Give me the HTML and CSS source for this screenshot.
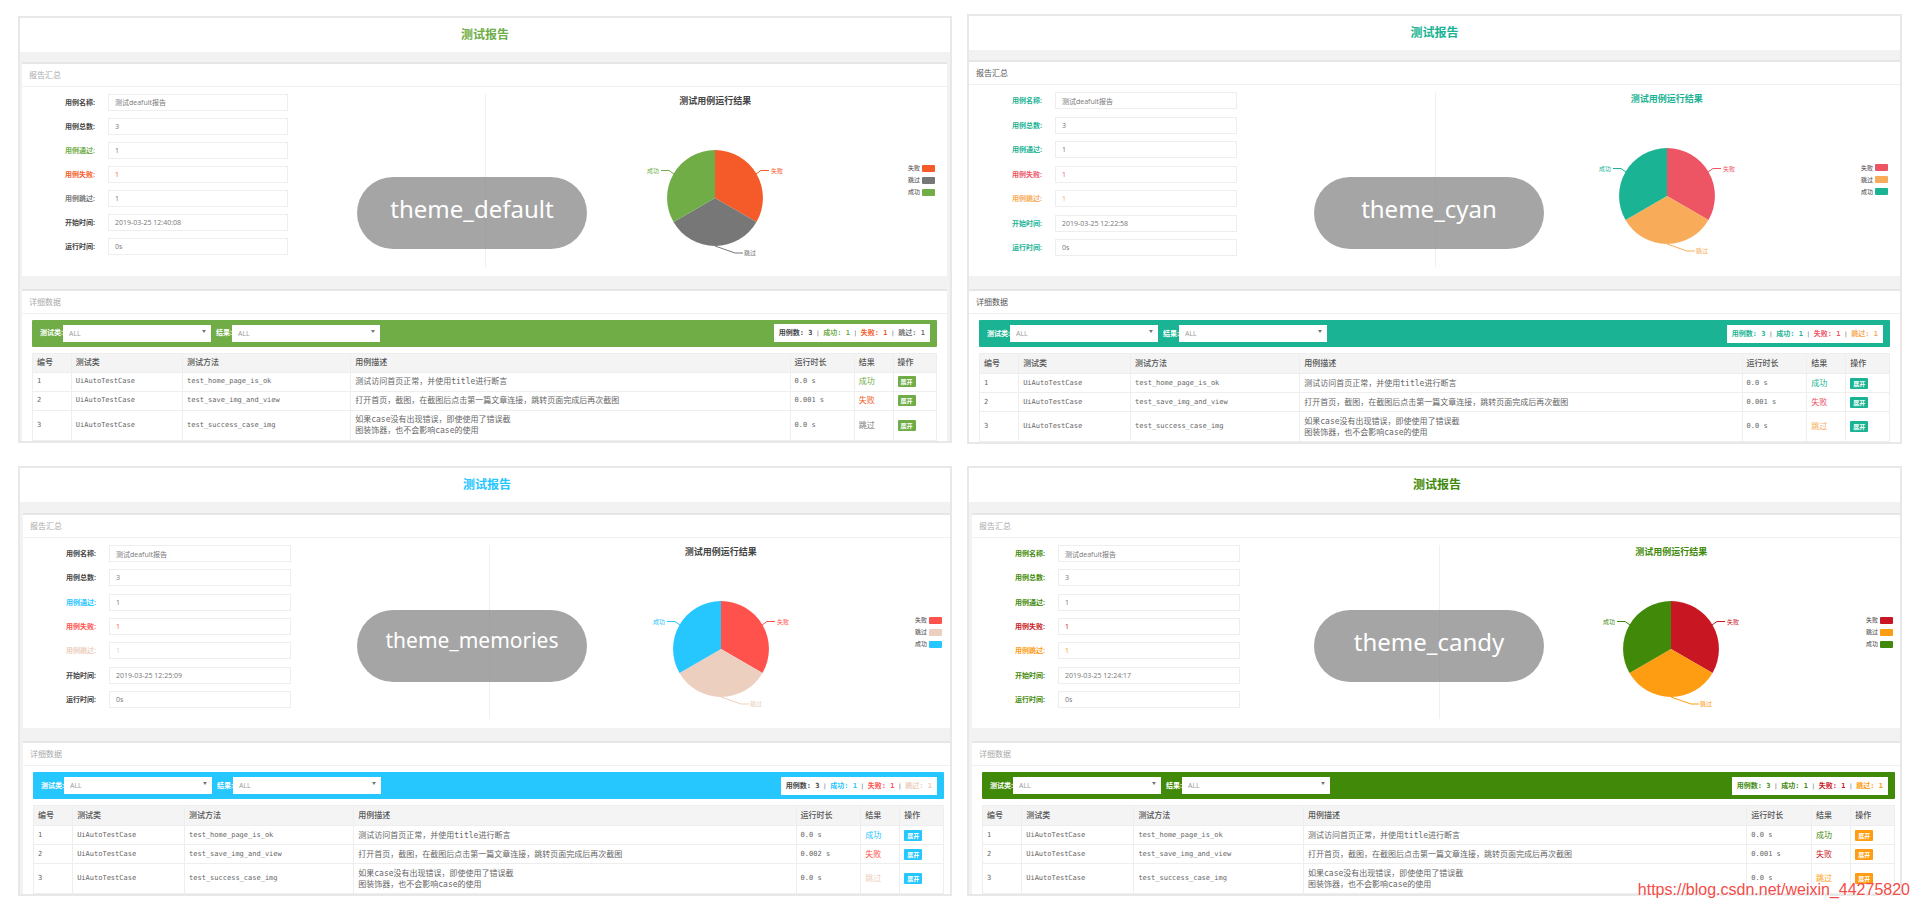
FILE: index.html
```html
<!DOCTYPE html>
<html lang="zh-CN">
<head>
<meta charset="utf-8">
<title>测试报告</title>
<link rel="stylesheet" href="styles.css">
</head>
<body>
<svg class="defs" aria-hidden="true">
  <symbol id="pie" viewBox="-75 -58 150 120">
    <path class="fill-fail" d="M0 0V-48A48 48 0 0 1 41.5 24Z"/>
    <path class="fill-skip" d="M0 0L41.5 24A48 48 0 0 1 -41.5 24Z"/>
    <path class="fill-pass" d="M0 0L-41.5 24A48 48 0 0 1 0 -48Z"/>
    <path class="line-fail" d="M41 -24L46 -27.5H54"/>
    <path class="line-skip" d="M0 48L20 55H28"/>
    <path class="line-pass" d="M-41 -24L-46 -27.5H-54"/>
  </symbol>
</svg>
<main class="gallery">

<article class="report theme-default">
  <div class="page">
    <header class="title"><h1>测试报告</h1></header>
    <section class="card">
      <h2>报告汇总</h2>
      <div class="summary">
        <form class="fields">
          <label for="a1">用例名称:</label><input id="a1" value="测试deafult报告">
          <label for="a2">用例总数:</label><input id="a2" value="3">
          <label for="a3" class="pass">用例通过:</label><input id="a3" value="1">
          <label for="a4" class="fail">用例失败:</label><input id="a4" class="fail" value="1">
          <label for="a5" class="skip">用例跳过:</label><input id="a5" class="skip" value="1">
          <label for="a6">开始时间:</label><input id="a6" value="2019-03-25 12:40:08">
          <label for="a7">运行时间:</label><input id="a7" value="0s">
        </form>
        <div class="chart">
          <h3>测试用例运行结果</h3>
          <svg class="pie" viewBox="-75 -58 150 120"><use href="#pie" x="-75" y="-58" width="150" height="120"/><text class="fill-fail" x="56" y="-25">失败</text><text class="fill-skip" x="29" y="57">跳过</text><text class="fill-pass" x="-56" y="-25" text-anchor="end">成功</text></svg>
          <ul class="legend"><li class="key-fail">失败</li><li class="key-skip">跳过</li><li class="key-pass">成功</li></ul>
        </div>
      </div>
    </section>
    <section class="card">
      <h2>详细数据</h2>
      <div class="details">
        <div class="toolbar">
          <label for="a8">测试类:</label><span class="select"><select id="a8"><option>ALL</option></select></span>
          <label for="a9">结果:</label><span class="select"><select id="a9"><option>ALL</option></select></span>
          <p class="stats"><b>用例数: 3</b><i> | </i><b class="pass">成功: 1</b><i> | </i><b class="fail">失败: 1</b><i> | </i><b class="skip">跳过: 1</b></p>
        </div>
        <table>
          <colgroup><col class="c-no"><col class="c-class"><col class="c-method"><col><col class="c-time"><col class="c-result"><col class="c-action"></colgroup>
          <thead><tr><th>编号</th><th>测试类</th><th>测试方法</th><th>用例描述</th><th>运行时长</th><th>结果</th><th>操作</th></tr></thead>
          <tbody>
            <tr><td>1</td><td>UiAutoTestCase</td><td>test_home_page_is_ok</td><td class="desc">测试访问首页正常，并使用title进行断言</td><td>0.0 s</td><td class="result pass">成功</td><td><button type="button">展开</button></td></tr>
            <tr><td>2</td><td>UiAutoTestCase</td><td>test_save_img_and_view</td><td class="desc">打开首页，截图，在截图后点击第一篇文章连接，跳转页面完成后再次截图</td><td>0.001 s</td><td class="result fail">失败</td><td><button type="button">展开</button></td></tr>
            <tr class="tall"><td>3</td><td>UiAutoTestCase</td><td>test_success_case_img</td><td class="desc">如果case没有出现错误，即使使用了错误截<br>图装饰器，也不会影响case的使用</td><td>0.0 s</td><td class="result skip">跳过</td><td><button type="button">展开</button></td></tr>
          </tbody>
        </table>
      </div>
    </section>
  </div>
  <p class="badge">theme_default</p>
</article>

<article class="report theme-cyan">
  <div class="page">
    <header class="title"><h1>测试报告</h1></header>
    <section class="card">
      <h2>报告汇总</h2>
      <div class="summary">
        <form class="fields">
          <label for="b1">用例名称:</label><input id="b1" value="测试deafult报告">
          <label for="b2">用例总数:</label><input id="b2" value="3">
          <label for="b3" class="pass">用例通过:</label><input id="b3" value="1">
          <label for="b4" class="fail">用例失败:</label><input id="b4" class="fail" value="1">
          <label for="b5" class="skip">用例跳过:</label><input id="b5" class="skip" value="1">
          <label for="b6">开始时间:</label><input id="b6" value="2019-03-25 12:22:58">
          <label for="b7">运行时间:</label><input id="b7" value="0s">
        </form>
        <div class="chart">
          <h3>测试用例运行结果</h3>
          <svg class="pie" viewBox="-75 -58 150 120"><use href="#pie" x="-75" y="-58" width="150" height="120"/><text class="fill-fail" x="56" y="-25">失败</text><text class="fill-skip" x="29" y="57">跳过</text><text class="fill-pass" x="-56" y="-25" text-anchor="end">成功</text></svg>
          <ul class="legend"><li class="key-fail">失败</li><li class="key-skip">跳过</li><li class="key-pass">成功</li></ul>
        </div>
      </div>
    </section>
    <section class="card">
      <h2>详细数据</h2>
      <div class="details">
        <div class="toolbar">
          <label for="b8">测试类:</label><span class="select"><select id="b8"><option>ALL</option></select></span>
          <label for="b9">结果:</label><span class="select"><select id="b9"><option>ALL</option></select></span>
          <p class="stats"><b>用例数: 3</b><i> | </i><b class="pass">成功: 1</b><i> | </i><b class="fail">失败: 1</b><i> | </i><b class="skip">跳过: 1</b></p>
        </div>
        <table>
          <colgroup><col class="c-no"><col class="c-class"><col class="c-method"><col><col class="c-time"><col class="c-result"><col class="c-action"></colgroup>
          <thead><tr><th>编号</th><th>测试类</th><th>测试方法</th><th>用例描述</th><th>运行时长</th><th>结果</th><th>操作</th></tr></thead>
          <tbody>
            <tr><td>1</td><td>UiAutoTestCase</td><td>test_home_page_is_ok</td><td class="desc">测试访问首页正常，并使用title进行断言</td><td>0.0 s</td><td class="result pass">成功</td><td><button type="button">展开</button></td></tr>
            <tr><td>2</td><td>UiAutoTestCase</td><td>test_save_img_and_view</td><td class="desc">打开首页，截图，在截图后点击第一篇文章连接，跳转页面完成后再次截图</td><td>0.001 s</td><td class="result fail">失败</td><td><button type="button">展开</button></td></tr>
            <tr class="tall"><td>3</td><td>UiAutoTestCase</td><td>test_success_case_img</td><td class="desc">如果case没有出现错误，即使使用了错误截<br>图装饰器，也不会影响case的使用</td><td>0.0 s</td><td class="result skip">跳过</td><td><button type="button">展开</button></td></tr>
          </tbody>
        </table>
      </div>
    </section>
  </div>
  <p class="badge">theme_cyan</p>
</article>

<article class="report theme-memories">
  <div class="page">
    <header class="title"><h1>测试报告</h1></header>
    <section class="card">
      <h2>报告汇总</h2>
      <div class="summary">
        <form class="fields">
          <label for="c1">用例名称:</label><input id="c1" value="测试deafult报告">
          <label for="c2">用例总数:</label><input id="c2" value="3">
          <label for="c3" class="pass">用例通过:</label><input id="c3" value="1">
          <label for="c4" class="fail">用例失败:</label><input id="c4" class="fail" value="1">
          <label for="c5" class="skip">用例跳过:</label><input id="c5" class="skip" value="1">
          <label for="c6">开始时间:</label><input id="c6" value="2019-03-25 12:25:09">
          <label for="c7">运行时间:</label><input id="c7" value="0s">
        </form>
        <div class="chart">
          <h3>测试用例运行结果</h3>
          <svg class="pie" viewBox="-75 -58 150 120"><use href="#pie" x="-75" y="-58" width="150" height="120"/><text class="fill-fail" x="56" y="-25">失败</text><text class="fill-skip" x="29" y="57">跳过</text><text class="fill-pass" x="-56" y="-25" text-anchor="end">成功</text></svg>
          <ul class="legend"><li class="key-fail">失败</li><li class="key-skip">跳过</li><li class="key-pass">成功</li></ul>
        </div>
      </div>
    </section>
    <section class="card">
      <h2>详细数据</h2>
      <div class="details">
        <div class="toolbar">
          <label for="c8">测试类:</label><span class="select"><select id="c8"><option>ALL</option></select></span>
          <label for="c9">结果:</label><span class="select"><select id="c9"><option>ALL</option></select></span>
          <p class="stats"><b>用例数: 3</b><i> | </i><b class="pass">成功: 1</b><i> | </i><b class="fail">失败: 1</b><i> | </i><b class="skip">跳过: 1</b></p>
        </div>
        <table>
          <colgroup><col class="c-no"><col class="c-class"><col class="c-method"><col><col class="c-time"><col class="c-result"><col class="c-action"></colgroup>
          <thead><tr><th>编号</th><th>测试类</th><th>测试方法</th><th>用例描述</th><th>运行时长</th><th>结果</th><th>操作</th></tr></thead>
          <tbody>
            <tr><td>1</td><td>UiAutoTestCase</td><td>test_home_page_is_ok</td><td class="desc">测试访问首页正常，并使用title进行断言</td><td>0.0 s</td><td class="result pass">成功</td><td><button type="button">展开</button></td></tr>
            <tr><td>2</td><td>UiAutoTestCase</td><td>test_save_img_and_view</td><td class="desc">打开首页，截图，在截图后点击第一篇文章连接，跳转页面完成后再次截图</td><td>0.002 s</td><td class="result fail">失败</td><td><button type="button">展开</button></td></tr>
            <tr class="tall"><td>3</td><td>UiAutoTestCase</td><td>test_success_case_img</td><td class="desc">如果case没有出现错误，即使使用了错误截<br>图装饰器，也不会影响case的使用</td><td>0.0 s</td><td class="result skip">跳过</td><td><button type="button">展开</button></td></tr>
          </tbody>
        </table>
      </div>
    </section>
  </div>
  <p class="badge badge-small">theme_memories</p>
</article>

<article class="report theme-candy">
  <div class="page">
    <header class="title"><h1>测试报告</h1></header>
    <section class="card">
      <h2>报告汇总</h2>
      <div class="summary">
        <form class="fields">
          <label for="d1">用例名称:</label><input id="d1" value="测试deafult报告">
          <label for="d2">用例总数:</label><input id="d2" value="3">
          <label for="d3" class="pass">用例通过:</label><input id="d3" value="1">
          <label for="d4" class="fail">用例失败:</label><input id="d4" class="fail" value="1">
          <label for="d5" class="skip">用例跳过:</label><input id="d5" class="skip" value="1">
          <label for="d6">开始时间:</label><input id="d6" value="2019-03-25 12:24:17">
          <label for="d7">运行时间:</label><input id="d7" value="0s">
        </form>
        <div class="chart">
          <h3>测试用例运行结果</h3>
          <svg class="pie" viewBox="-75 -58 150 120"><use href="#pie" x="-75" y="-58" width="150" height="120"/><text class="fill-fail" x="56" y="-25">失败</text><text class="fill-skip" x="29" y="57">跳过</text><text class="fill-pass" x="-56" y="-25" text-anchor="end">成功</text></svg>
          <ul class="legend"><li class="key-fail">失败</li><li class="key-skip">跳过</li><li class="key-pass">成功</li></ul>
        </div>
      </div>
    </section>
    <section class="card">
      <h2>详细数据</h2>
      <div class="details">
        <div class="toolbar">
          <label for="d8">测试类:</label><span class="select"><select id="d8"><option>ALL</option></select></span>
          <label for="d9">结果:</label><span class="select"><select id="d9"><option>ALL</option></select></span>
          <p class="stats"><b>用例数: 3</b><i> | </i><b class="pass">成功: 1</b><i> | </i><b class="fail">失败: 1</b><i> | </i><b class="skip">跳过: 1</b></p>
        </div>
        <table>
          <colgroup><col class="c-no"><col class="c-class"><col class="c-method"><col><col class="c-time"><col class="c-result"><col class="c-action"></colgroup>
          <thead><tr><th>编号</th><th>测试类</th><th>测试方法</th><th>用例描述</th><th>运行时长</th><th>结果</th><th>操作</th></tr></thead>
          <tbody>
            <tr><td>1</td><td>UiAutoTestCase</td><td>test_home_page_is_ok</td><td class="desc">测试访问首页正常，并使用title进行断言</td><td>0.0 s</td><td class="result pass">成功</td><td><button type="button">展开</button></td></tr>
            <tr><td>2</td><td>UiAutoTestCase</td><td>test_save_img_and_view</td><td class="desc">打开首页，截图，在截图后点击第一篇文章连接，跳转页面完成后再次截图</td><td>0.001 s</td><td class="result fail">失败</td><td><button type="button">展开</button></td></tr>
            <tr class="tall"><td>3</td><td>UiAutoTestCase</td><td>test_success_case_img</td><td class="desc">如果case没有出现错误，即使使用了错误截<br>图装饰器，也不会影响case的使用</td><td>0.0 s</td><td class="result skip">跳过</td><td><button type="button">展开</button></td></tr>
          </tbody>
        </table>
      </div>
    </section>
  </div>
  <p class="badge">theme_candy</p>
</article>

</main>
<p class="watermark">https://blog.csdn.net/weixin_44275820</p>
</body>
</html>
```

FILE: styles.css
```css
* { box-sizing: border-box; margin: 0; padding: 0; }

body {
  position: relative;
  background: #fff;
  font-family: "Open Sans", "Noto Sans CJK SC", sans-serif;
  color: #666;
}

.defs { position: absolute; width: 0; height: 0; }

.gallery {
  display: grid;
  grid-template-columns: 934fr 935fr;
  align-items: center;
  gap: 22px 15px;
  padding: 14px 17px 12px 18px;
}

/* themes */
.report {
  --ink: #444;
  --heading: #aaa;
  --accent: var(--pass);
  --button: var(--accent);
  --gap: 11px;
  --summary: 190px;
  --head-row: 20px;
  --left: 3px;
  --right: 0px;
  --overhang: 0px;
  --badge-x: 339px;
  --badge-y: 144px;
  position: relative;
  overflow: hidden;
  border: 2px solid #e8e8e8;
  background: #f2f2f2;
}
.theme-default {
  --pass: #70ad47; --fail: #f45b29; --skip: #777;
  --gap: 10px; --summary: 189px; --head-row: 19px;
  --left: 2px; --right: 3px; --badge-x: 337px; --badge-y: 159px;
}
.theme-cyan {
  --pass: #1ab394; --fail: #ed5565; --skip: #f8ac59;
  --ink: var(--pass); --heading: #555;
  --gap: 10px; --summary: 191px;
  --left: 0px; --badge-x: 345px; --badge-y: 161px;
}
.theme-memories {
  --pass: #26c6ff; --fail: #ff524d; --skip: #eccfbe;
  --overhang: -4px; --badge-x: 337px; --badge-y: 142px;
}
.theme-candy {
  --pass: #418a09; --fail: #c81623; --skip: #fe9c12;
  --ink: var(--pass); --button: var(--skip);
  --overhang: -5px; --badge-x: 345px; --badge-y: 142px;
}

.pass { color: var(--pass); }
.fail { color: var(--fail); }
.skip { color: var(--skip); }

.page { margin-right: var(--overhang); }

.title {
  display: flex;
  align-items: center;
  justify-content: center;
  height: 34px;
  background: #fff;
}
.title h1 { font-size: 12px; line-height: 16px; color: var(--accent); }

.card {
  margin: var(--gap) var(--right) 0 var(--left);
  border-top: 2px solid #e4e6e8;
  background: #fff;
}
.card + .card { margin-top: 13px; }
.card h2 {
  height: 23px;
  padding-left: 7px;
  border-bottom: 1px solid #f0f0f0;
  font-size: 8px;
  font-weight: 400;
  line-height: 22px;
  color: var(--heading);
}

.summary {
  display: grid;
  grid-template-columns: 1fr 1fr;
  height: var(--summary);
  padding: 7px 0 9px;
}

.fields {
  display: grid;
  grid-template-columns: 73px 39%;
  column-gap: 13px;
  align-content: space-between;
  align-items: center;
  padding-bottom: 11px;
}
.fields label {
  font-size: 7px;
  font-weight: 700;
  line-height: 17px;
  text-align: right;
}
.fields label:not([class]) { color: var(--ink); }
.fields input {
  width: 100%;
  height: 17px;
  padding: 0 6px;
  border: 1px solid #eee;
  background: #fff;
  font: 7px/15px "Open Sans", "Noto Sans CJK SC", sans-serif;
  outline: none;
}
.fields input:not([class]) { color: #777; }

.chart {
  display: grid;
  grid-template-columns: 1fr 150px 1fr;
  grid-template-rows: 14px 1fr;
  padding-right: 2px;
  border-left: 1px solid #f0f0f0;
}
.chart h3 {
  grid-column: 1 / 4;
  grid-row: 1;
  font-size: 9px;
  line-height: 14px;
  text-align: center;
  color: var(--ink);
}
.pie {
  grid-column: 2;
  grid-row: 2;
  width: 150px;
  height: 120px;
  margin-top: 32px;
}
.pie text { font-size: 6px; }
.fill-pass { fill: var(--pass); }
.fill-fail { fill: var(--fail); }
.fill-skip { fill: var(--skip); }
.line-pass, .line-fail, .line-skip { fill: none; stroke-width: 1; }
.line-pass { stroke: var(--pass); }
.line-fail { stroke: var(--fail); }
.line-skip { stroke: var(--skip); }

.legend {
  grid-column: 3;
  grid-row: 1 / 3;
  display: grid;
  gap: 4px;
  align-content: center;
  justify-content: end;
  padding-right: 10px;
  list-style: none;
  font-size: 6px;
  line-height: 8px;
  color: #444;
}
.legend li { display: flex; align-items: center; gap: 2px; }
.legend li::after {
  content: "";
  width: 13px;
  height: 7px;
  border-radius: 1px;
  background: var(--key);
}
.key-pass { --key: var(--pass); }
.key-fail { --key: var(--fail); }
.key-skip { --key: var(--skip); }

.details { padding: 6px 10px 0; }

.toolbar {
  display: flex;
  align-items: center;
  height: 27px;
  margin-bottom: 6px;
  padding: 0 7px 0 8px;
  border-radius: 1px;
  background: var(--accent);
}
.toolbar label {
  flex: none;
  font-size: 7px;
  font-weight: 700;
  line-height: 16px;
  color: #fff;
}
.select { position: relative; width: 148px; margin-right: 5px; }
.select::after {
  content: "";
  position: absolute;
  top: 5px;
  right: 5px;
  border: 2px solid transparent;
  border-top: 3px solid #777;
  border-bottom: 0;
}
.select select {
  display: block;
  width: 100%;
  height: 17px;
  padding: 0 6px;
  border: 0;
  border-radius: 0;
  appearance: none;
  background: #fff;
  font: 7px/17px "Open Sans", sans-serif;
  color: #999;
}
.stats {
  margin-left: auto;
  padding: 0 5px;
  background: #fff;
  font: 7px/17px "DejaVu Sans Mono", "Noto Sans CJK SC", monospace;
  white-space: pre;
}
.stats b:not([class]) { color: var(--ink); }
.stats i { font-size: 6px; font-style: normal; }

table {
  width: 100%;
  table-layout: fixed;
  border-collapse: collapse;
  font: 7px/11px "DejaVu Sans Mono", "Noto Sans CJK SC", monospace;
}
.c-no { width: 4.3%; }
.c-class { width: 12.3%; }
.c-method { width: 18.6%; }
.c-time { width: 7.1%; }
.c-result { width: 4.3%; }
.c-action { width: 4.8%; }
th, td {
  height: 19px;
  padding: 0 4px;
  border: 1px solid #eee;
  text-align: left;
  vertical-align: middle;
  white-space: nowrap;
}
th {
  height: var(--head-row);
  background: #f4f4f4;
  font-size: 8px;
  font-weight: 500;
  color: #555;
}
.tall td { height: 30px; }
.desc, .result { font-size: 8px; }
td button {
  display: block;
  width: 18px;
  height: 11px;
  border: 0;
  border-radius: 1px;
  background: var(--button);
  font: 700 6px/11px "Noto Sans CJK SC", sans-serif;
  color: #fff;
}

.badge {
  position: absolute;
  top: var(--badge-y);
  left: var(--badge-x);
  width: 230px;
  border-radius: 36px;
  background: rgba(127, 127, 127, 0.7);
  font: 24px/64px "Noto Sans", sans-serif;
  padding-bottom: 8px;
  text-align: center;
  color: #fff;
}
.badge-small { font-size: 21px; line-height: 60px; padding-bottom: 12px; }

.watermark {
  position: absolute;
  right: 9px;
  bottom: 8px;
  font: 16px/20px "Liberation Sans", sans-serif;
  color: #f44c48;
  text-shadow: 1px 1px 1px #fff;
}
```
